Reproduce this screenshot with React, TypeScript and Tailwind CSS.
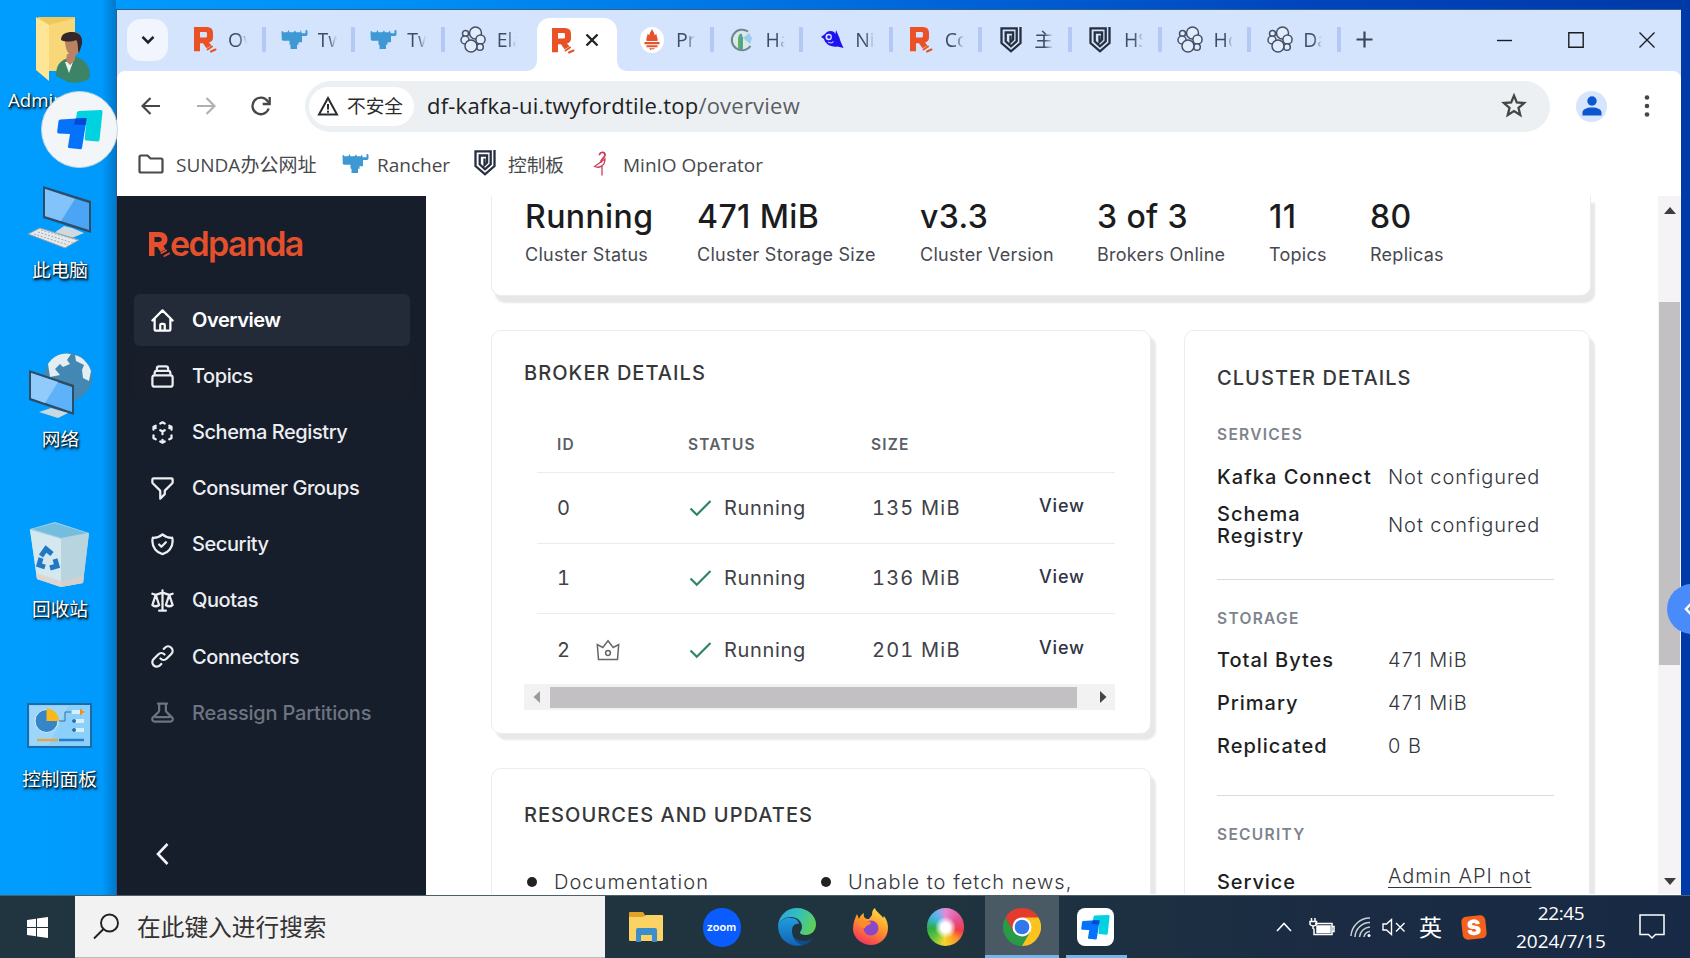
import type { ReactNode } from "react";

/* ---------- small logos ---------- */

function RedpandaMark() {
  return (
    <svg width="24" height="27" viewBox="0 0 24 27" className="shrink-0">
      <path
        fill="#ea5126"
        fillRule="evenodd"
        d="M1 1h13q6 0 6 6v4.500q0 4-4 5l2.500 3-5 2.700-3.500-5H7v8H1zM7 6v5.500h5.500q1.500 0 1.500-1.300V7.300Q14 6 12.500 6z"
      />
      <path stroke="#ea5126" strokeWidth="2" strokeLinecap="round" d="M14.500 23.500l4.500-3M18 25.500l4.500-2" />
    </svg>
  );
}

function RancherMark() {
  return (
    <svg width="27" height="22" viewBox="0 0 27 22" className="shrink-0">
      <path
        fill="#3d98d3"
        d="M.5 2.500L2 2l.3 1.200h4L7.500 1l1 2.200h4L14 1.500l1 1.700h4l.8-2 1 3h3.700V1.600l1.300-.8.700 1.200v4l-1.300 1h-4.200v6.300h-3.500v2.500h-1.500v4.300H9.500v-4.300h-1v-4H2L.8 11z"
      />
    </svg>
  );
}

function ElasticMark() {
  return (
    <svg width="26" height="27" viewBox="0 0 26 27" className="shrink-0" fill="#e3ecfb" stroke="#44506a" strokeWidth="1.500">
      <circle cx="15.500" cy="7" r="6" />
      <circle cx="5.500" cy="7.500" r="3" />
      <circle cx="5" cy="14" r="4" />
      <circle cx="20.500" cy="13.500" r="4.600" />
      <circle cx="20" cy="21" r="3.300" />
      <circle cx="11" cy="20" r="6" />
    </svg>
  );
}

function PrometheusMark() {
  return (
    <svg width="24" height="26" viewBox="0 0 24 26" className="shrink-0">
      <ellipse cx="12" cy="13" rx="12" ry="13" fill="#fff" />
      <path
        fill="#e5532c"
        d="M12 2c1.500 3 2.600 4 2.700 6.500l1.600-1.800c.2 3 2 4.500 1.200 7.300H6.500C5.700 11 7.500 9.500 7.700 6.500l1.600 2C9.400 6 11 4.500 12 2zM4.500 15h15v2.200h-15zM6.500 18.200h11v2h-11zM9 21.200h6c-.6 1.600-5.400 1.600-6 0z"
      />
    </svg>
  );
}

function HarborMark() {
  return (
    <svg width="24" height="24" viewBox="0 0 24 24" className="shrink-0">
      <path d="M18 3.500A10.300 10.300 0 1 0 20.500 18" fill="#d8e9e6" stroke="#6f8792" strokeWidth="2" />
      <path fill="#62b257" d="M8 21V10l1-3 1.500-1.500L12 7l1 3v11z" />
      <path fill="#4596c8" d="M10.500 6h1.500v15h-1.500z" />
      <path fill="#9ccdf0" d="M13 10l6-5 3 5-2 6z" />
    </svg>
  );
}

function BirdMark() {
  return (
    <svg width="24" height="22" viewBox="0 0 24 22" className="shrink-0">
      <path fill="#1d13ef" d="M1 8l4-3C7 2 11 1 14 3l1.500 2L16 1l3.500 8c1 4 2 5 4 10l-6-1.500C11 18.500 5 15 4 10z" />
      <circle cx="8.700" cy="8" r="3.200" fill="#dfe6fd" />
      <circle cx="8.900" cy="8" r="1.700" fill="#1d13ef" />
      <path stroke="#a9b4fa" strokeWidth="1.200" fill="none" d="M8 13c2 1.500 4 1 5.500-.5" />
    </svg>
  );
}

function ShieldMark() {
  return (
    <svg width="22" height="26" viewBox="0 0 22 26" className="shrink-0" fill="none" stroke="#262f40" strokeWidth="2.300">
      <path d="M20.500 0v16L11 24.300 1.500 16V1.300h15.200v12.900L11 19.300l-5.300-5V5.500h7.400v7L10.500 15V8.500" />
    </svg>
  );
}

function FlamingoMark() {
  return (
    <svg width="16" height="25" viewBox="0 0 16 25" className="shrink-0" fill="none" stroke="#cc3b58" strokeLinecap="round">
      <path strokeWidth="1.800" d="M6.500 3.500C7.500.5 12 .8 12 4c0 3-4.500 4-4 7" />
      <path strokeWidth="1.300" d="M12 8L1.500 15.500C6 17.500 12 15 12 8zM9 15.500V24" />
    </svg>
  );
}

function TeamMark({ w, h }: { w: number; h: number }) {
  return (
    <svg width={w} height={h} viewBox="0 0 46 40" className="shrink-0">
      <path fill="#00d2e0" d="M20 2.500Q20 1 22 .9L44 0q1.700 0 1.500 2L42.500 30q-.2 1.600-2 1.400L29 30.500q-1.500-.2-1.300-1.700L29 15H18z" />
      <path fill="#0572fb" d="M1.500 11Q1.700 9.700 3.500 9.500L28.500 8q1.300 0 1.100 1.500L25 38q-.3 1.300-1.700 1.200L12 38q-1.300-.2-1-1.500L13 24 1.500 23.500q-1.500-.2-1.300-2z" />
      <path fill="#0349d6" d="M18.500 8.600L29.500 8l-1 7L17 14.500z" />
    </svg>
  );
}

/* ---------- desktop ---------- */

function DesktopLabel({ children }: { children: ReactNode }) {
  return (
    <span className="whitespace-nowrap text-[18.700px] leading-6 text-white [text-shadow:1px_1px_2px_#000,1px_2px_3px_rgba(0,0,0,0.8)]">
      {children}
    </span>
  );
}

function UserFolderIcon() {
  return (
    <svg width="58" height="68" viewBox="0 0 58 68">
      <path fill="#f1c75b" d="M4 1h37v54H4z" />
      <path fill="#ffe596" d="M2 1l13 8v56L2 54z" />
      <path fill="#f8d778" d="M15 9l26-7v52l-26 1z" />
      <path fill="#3c8468" d="M22 60c0-10 3-15 12-18l9-1c8 3 13 8 13 20-2 5-16 7-22 5z" />
      <path fill="#eef3f3" d="M31 46l4 11 4-11z" />
      <path fill="#b98263" d="M31 24c0-6 3-8 9-8s8 4 7 12-4 12-8 12-8-6-8-16zM33 38h8v6l-5 5-4-4z" />
      <path fill="#35262a" d="M27 24c0-6 5-8 11-8 8 0 11 5 10 12l-3 9c-2-3 0-10-3-13-4 2-11 2-15 0z" />
    </svg>
  );
}

function ComputerIcon() {
  return (
    <svg width="64" height="64" viewBox="0 0 64 64">
      <path fill="#2d4d66" d="M15 1l48 15v32L15 33z" />
      <path fill="#4ba4f4" d="M17 4l44 14v27L17 31z" />
      <path fill="#83c3fb" d="M17 4l30 10-14 22-16-5z" />
      <path fill="#cfd9de" d="M36 41l8 2 12 5-12 5-18-5z" />
      <path fill="#e5eaed" stroke="#8c9da8" d="M0 49l12-6 39 12-14 8z" />
      <path stroke="#9cabb4" strokeWidth="1" strokeDasharray="2 1.500" d="M6 49l34 11M10 47l35 11M13 45l36 10" />
    </svg>
  );
}

function NetworkIcon() {
  return (
    <svg width="64" height="66" viewBox="0 0 64 66">
      <circle cx="39" cy="25" r="24" fill="#4288b2" />
      <path fill="#e2eef2" d="M19 12C24 4 33 0 42 2l-4 6 3 4-7 3-3-3-5 5 5 6-10 2zM46 3c8 2 14 9 16 16l-2 10-6-3-1-8 2-5-8-4z" />
      <path fill="#2d4d66" d="M0 18l45 15v30L0 48z" />
      <path fill="#5eb2fa" d="M2 21l41 14v25L2 46z" />
      <path fill="#91cbfc" d="M2 21l27 9-13 21-14-5z" />
      <path fill="#cbd8df" d="M10 60l12-4 17 5-10 5z" />
    </svg>
  );
}

function RecycleIcon() {
  return (
    <svg width="60" height="66" viewBox="0 0 60 66">
      <path fill="#a9d7ea" d="M0 7L25 0l34 11-6 50-22 4L7 57z" />
      <path fill="#75bddd" d="M2 7l23-6 32 10-26 5z" />
      <path fill="#d5e8ef" d="M0 8l31 9v48L7 57z" />
      <path fill="#b7d4df" d="M31 17l28-6-6 50-22 4z" />
      <path fill="#e0cfc8" d="M6 51l25 8 23-5-1 7-22 4-24-8z" opacity=".7" />
      <g fill="none" stroke="#1f77c5" strokeWidth="5">
        <path d="M11 34l5-7 6 5" />
        <path d="M25 37l2 7-7 2" />
        <path d="M15 45l-6-2 2-7" />
      </g>
    </svg>
  );
}

function ControlPanelIcon() {
  return (
    <svg width="65" height="45" viewBox="0 0 65 45">
      <rect x="1" y="1" width="63" height="43" fill="#8bd0fb" stroke="#1d6ba6" strokeWidth="2" />
      <path fill="#a8dcfc" d="M3 3h38L22 42H3z" opacity=".6" />
      <circle cx="19.500" cy="18" r="11.500" fill="#3586c8" stroke="#d8effd" />
      <path fill="#fbb81c" d="M19.500 18V5.500A12.500 12.500 0 0 1 32 18z" />
      <path fill="none" stroke="#33739e" d="M32 18h6V9h6" />
      <path stroke="#d5effd" strokeWidth="4" d="M45 9h12M45 18h12M45 27h12" />
      <path fill="#e89127" d="M53 5.500l5 3.500-5 3.500z" />
      <circle cx="47" cy="18" r="2" fill="#2070b0" />
      <circle cx="47" cy="27" r="2" fill="#2070b0" />
      <path stroke="#e7a544" strokeWidth="2.500" d="M10 37h21" />
      <path stroke="#2380c6" strokeWidth="2.500" d="M32 37h25" />
    </svg>
  );
}

function Desktop() {
  return (
    <div className="flex h-[895px] w-[116px] shrink-0 flex-col bg-[linear-gradient(90deg,transparent_88%,rgba(0,60,110,0.35)_100%)]">
      <div className="flex h-[170px] flex-col items-start pl-2 pt-4">
        <div className="pl-[26px]">
          <UserFolderIcon />
        </div>
        <div className="mt-[4px]">
          <DesktopLabel>Admin</DesktopLabel>
        </div>
      </div>
      <div className="flex h-[168px] w-[120px] flex-col items-center pt-[15px]">
        <ComputerIcon />
        <div className="mt-[9px]">
          <DesktopLabel>此电脑</DesktopLabel>
        </div>
      </div>
      <div className="flex h-[169px] w-[121px] flex-col items-center pt-[14px]">
        <NetworkIcon />
        <div className="mt-[9px]">
          <DesktopLabel>网络</DesktopLabel>
        </div>
      </div>
      <div className="flex h-[171px] w-[120px] flex-col items-center pt-[15px]">
        <RecycleIcon />
        <div className="mt-[9px]">
          <DesktopLabel>回收站</DesktopLabel>
        </div>
      </div>
      <div className="flex w-[119px] flex-col items-center pt-[25px]">
        <ControlPanelIcon />
        <div className="mt-[19px]">
          <DesktopLabel>控制面板</DesktopLabel>
        </div>
      </div>
    </div>
  );
}

/* ---------- browser chrome ---------- */

type Tab = { icon: ReactNode; title: string; active?: boolean; sep?: boolean };

const tabs: Tab[] = [
  { icon: <RedpandaMark />, title: "Ov", sep: true },
  { icon: <RancherMark />, title: "Tw", sep: true },
  { icon: <RancherMark />, title: "Tw", sep: true },
  { icon: <ElasticMark />, title: "Ela" },
  { icon: <RedpandaMark />, title: "", active: true },
  { icon: <PrometheusMark />, title: "Pr", sep: true },
  { icon: <HarborMark />, title: "Ha", sep: true },
  { icon: <BirdMark />, title: "Ni", sep: true },
  { icon: <RedpandaMark />, title: "Co", sep: true },
  { icon: <ShieldMark />, title: "主", sep: true },
  { icon: <ShieldMark />, title: "HS", sep: true },
  { icon: <ElasticMark />, title: "Ho", sep: true },
  { icon: <ElasticMark />, title: "Da", sep: true },
];

function TabItem({ tab }: { tab: Tab }) {
  if (tab.active) {
    return (
      <div className="flex h-[61px] w-[89.600px] items-end">
        <svg width="11" height="12" viewBox="0 0 11 12" className="-ml-[8px] shrink-0">
          <path fill="#fff" d="M11 0v12H0C8 12 11 7 11 0z" />
        </svg>
        <div className="flex h-[53px] w-[80px] shrink-0 items-center rounded-t-[13px] bg-white pb-[9px] pl-[14px]">
          <RedpandaMark />
          <svg width="14" height="14" viewBox="0 0 14 14" className="ml-[10px] shrink-0" stroke="#1f2023" strokeWidth="2.300">
            <path d="M1.500 1.500l11 11M12.500 1.500l-11 11" />
          </svg>
        </div>
        <svg width="11" height="12" viewBox="0 0 11 12" className="shrink-0">
          <path fill="#fff" d="M0 0v12h11C3 12 0 7 0 0z" />
        </svg>
      </div>
    );
  }
  return (
    <div className="flex h-[61px] w-[89.600px] items-center pb-[2px]">
      <div className="ml-[15px] flex w-[27px] shrink-0 items-center justify-center">{tab.icon}</div>
      <span className="ml-[10px] w-[19px] shrink-0 overflow-hidden whitespace-nowrap text-[19.500px] leading-7 text-[#3f4d63] [mask-image:linear-gradient(to_right,black_55%,transparent)]">
        {tab.title}
      </span>
      <span className={tab.sep ? "ml-auto h-[25px] w-[4px] bg-[#b4c8f5]" : "hidden"} />
    </div>
  );
}

function TabStrip() {
  return (
    <div className="flex h-[61px] items-center bg-[#d4e4fd] pl-[10px]">
      <div className="mb-[1px] flex h-[42px] w-[41px] items-center justify-center rounded-[14px] bg-[#f0f5fe]">
        <svg width="14" height="10" viewBox="0 0 14 10" fill="none" stroke="#1f2023" strokeWidth="2.600">
          <path d="M1.500 1.800L7 7.300l5.500-5.500" />
        </svg>
      </div>
      <div className="ml-[8px] flex">
        {tabs.map((t, i) => (
          <TabItem key={i} tab={t} />
        ))}
      </div>
      <svg width="17" height="17" viewBox="0 0 17 17" className="mb-[2px] ml-[15px]" stroke="#3a4557" strokeWidth="2.200">
        <path d="M8.500 .5v16M.5 8.500h16" />
      </svg>
      <div className="mb-[1px] ml-auto flex items-center gap-[55px] pr-[26px]">
        <svg width="16" height="16" viewBox="0 0 16 16" stroke="#1b1c1f" strokeWidth="1.400">
          <path d="M0 8.500h15" />
        </svg>
        <svg width="16" height="16" viewBox="0 0 16 16" fill="none" stroke="#1b1c1f" strokeWidth="1.400">
          <path d="M.8 .8h14.400v14.400H.8z" />
        </svg>
        <svg width="16" height="16" viewBox="0 0 16 16" stroke="#1b1c1f" strokeWidth="1.400">
          <path d="M.5 .5l15 15M15.500 .5l-15 15" />
        </svg>
      </div>
    </div>
  );
}

function Toolbar() {
  return (
    <div className="bg-[#d4e4fd]">
      <div className="flex h-[70px] items-center rounded-t-[8px] bg-white">
        <svg width="20" height="18" viewBox="0 0 20 18" className="ml-[24px]" fill="none" stroke="#474747" strokeWidth="2.200">
          <path d="M19 9H2M9.500 1L1.500 9l8 8" />
        </svg>
        <svg width="20" height="18" viewBox="0 0 20 18" className="ml-[35px]" fill="none" stroke="#b0b0b0" strokeWidth="2.200">
          <path d="M1 9h17M10.500 1l8 8-8 8" />
        </svg>
        <svg width="20" height="20" viewBox="0 0 20 20" className="ml-[35px]" fill="none" stroke="#474747" strokeWidth="2.300">
          <path d="M17.700 12.500A8.300 8.300 0 1 1 16.500 5L18.500 7.200" />
          <path d="M18.700 1v7h-7" />
        </svg>
        <div className="ml-[34px] flex h-[51px] w-[1245px] items-center rounded-full bg-[#ecf0f3] pl-[4px]">
          <div className="flex h-[39px] w-[105px] items-center rounded-full bg-white pl-[8px]">
            <svg width="22" height="20" viewBox="0 0 22 20" fill="none" stroke="#2b2c2e" strokeWidth="2">
              <path d="M11 2L20 18.500H2zM11 8v5.500M11 14.800v2" />
            </svg>
            <span className="ml-[8px] whitespace-nowrap text-[18.700px] leading-7 text-[#2b2c2e]">不安全</span>
          </div>
          <span className="-mt-[2px] ml-[13px] whitespace-nowrap text-[22px] leading-8 tracking-[0.220px] text-[#202124]">
            df-kafka-ui.twyfordtile.top<span className="text-[#5a5e63]">/overview</span>
          </span>
          <svg width="26" height="25" viewBox="0 0 24 24" className="mb-[2px] ml-auto mr-[23px]" fill="none" stroke="#444746" strokeWidth="2.200">
            <path d="M12 2.500l2.700 6.600 7 .5-5.400 4.600 1.700 6.900-6-3.800-6 3.800 1.700-6.900L2.300 9.600l7-.5z" />
          </svg>
        </div>
        <div className="ml-[26px] flex h-[31px] w-[31px] items-center justify-center rounded-full bg-[#d6e4fd]">
          <svg width="20" height="20" viewBox="0 0 20 20" fill="#0b57d0">
            <circle cx="10" cy="5" r="4.700" />
            <path d="M.5 19.500v-3c0-3 4-5 9.500-5s9.500 2 9.500 5v3z" />
          </svg>
        </div>
        <svg width="6" height="24" viewBox="0 0 6 24" className="ml-[37px]" fill="#444746">
          <circle cx="3" cy="3.500" r="2.300" />
          <circle cx="3" cy="12" r="2.300" />
          <circle cx="3" cy="20.500" r="2.300" />
        </svg>
      </div>
    </div>
  );
}

function BookmarksBar() {
  return (
    <div className="flex h-[55px] items-start whitespace-nowrap bg-white text-[19px] leading-7 text-[#47494c]">
      <svg width="26" height="20" viewBox="0 0 26 20" className="ml-[21px] mt-[13px]" fill="none" stroke="#47494c" strokeWidth="2.200">
        <path d="M1.500 3q0-1.500 1.500-1.500h6.500L12.500 4.500H23q1.500 0 1.500 1.500v11q0 1.500-1.500 1.500H3q-1.500 0-1.500-1.500z" />
      </svg>
      <span className="ml-[12px] mt-[10px] w-[141px]">SUNDA办公网址</span>
      <div className="ml-[25px] mt-[12px]">
        <RancherMark />
      </div>
      <span className="ml-[8px] mt-[10px] w-[73px]">Rancher</span>
      <div className="ml-[24px] mt-[9px]">
        <ShieldMark />
      </div>
      <span className="ml-[12px] mt-[10px] w-[57px] text-[18.700px]">控制板</span>
      <div className="ml-[28px] mt-[10px]">
        <FlamingoMark />
      </div>
      <span className="ml-[14px] mt-[10px]">MinIO Operator</span>
    </div>
  );
}

/* ---------- sidebar ---------- */

const nav = [
  {
    label: "Overview",
    state: "active",
    d: "M3 12l2-2m0 0l7-7 7 7M5 10v10a1 1 0 001 1h3m10-11l2 2m-2-2v10a1 1 0 01-1 1h-3m-6 0a1 1 0 001-1v-4a1 1 0 011-1h2a1 1 0 011 1v4a1 1 0 001 1m-6 0h6",
  },
  {
    label: "Topics",
    state: "hover",
    d: "M19 11H5m14 0a2 2 0 012 2v6a2 2 0 01-2 2H5a2 2 0 01-2-2v-6a2 2 0 012-2m14 0V9a2 2 0 00-2-2M5 11V9a2 2 0 012-2m0 0V5a2 2 0 012-2h6a2 2 0 012 2v2M7 7h10",
  },
  {
    label: "Schema Registry",
    state: "",
    d: "M14 10l-2 1m0 0l-2-1m2 1v2.500M20 7l-2 1m2-1l-2-1m2 1v2.500M14 4l-2-1-2 1M4 7l2-1M4 7l2 1M4 7v2.500M12 21l-2-1m2 1l2-1m-2 1v-2.500M6 18l-2-1v-2.500M18 18l2-1v-2.500",
  },
  {
    label: "Consumer Groups",
    state: "",
    d: "M3 4a1 1 0 011-1h16a1 1 0 011 1v2.586a1 1 0 01-.293.707l-6.414 6.414a1 1 0 00-.293.707V17l-4 4v-6.586a1 1 0 00-.293-.707L3.293 7.293A1 1 0 013 6.586V4z",
  },
  {
    label: "Security",
    state: "",
    d: "M9 12l2 2 4-4m5.618-4.016A11.955 11.955 0 0112 2.944a11.955 11.955 0 01-8.618 3.040A12.020 12.020 0 003 9c0 5.591 3.824 10.290 9 11.622 5.176-1.332 9-6.030 9-11.622 0-1.042-.133-2.052-.382-3.016z",
  },
  {
    label: "Quotas",
    state: "",
    d: "M3 6l3 1m0 0l-3 9a5.002 5.002 0 006.001 0M6 7l3 9M6 7l6-2m6 2l3-1m-3 1l-3 9a5.002 5.002 0 006.001 0M18 7l3 9m-3-9l-6-2m0-2v2m0 16V5m0 16H9m3 0h3",
  },
  {
    label: "Connectors",
    state: "",
    d: "M13.828 10.172a4 4 0 00-5.656 0l-4 4a4 4 0 105.656 5.656l1.102-1.101m-.758-4.899a4 4 0 005.656 0l4-4a4 4 0 00-5.656-5.656l-1.100 1.100",
  },
  {
    label: "Reassign Partitions",
    state: "disabled",
    d: "M8 4h8l-1 1v5.172a2 2 0 00.586 1.414l5 5c1.260 1.260.367 3.414-1.415 3.414H4.828c-1.782 0-2.674-2.154-1.414-3.414l5-5A2 2 0 009 10.172V5L8 4zM6 16h12",
  },
];

function Sidebar() {
  return (
    <aside className="flex w-[309px] shrink-0 flex-col bg-[#161d2b] px-[17px] [font-family:Inter,sans-serif]">
      <div className="mt-[24px] flex h-[48px] items-center pl-[14px] text-[34px] font-semibold leading-[48px] tracking-[-1.600px] text-[#e4502b]">
        <svg width="24" height="27" viewBox="0 0 24 27" className="mr-[-2px] mt-[1px] shrink-0">
          <path
            fill="#e4502b"
            fillRule="evenodd"
            d="M1 1h10c5.500 0 8.500 3 8.500 7.500 0 3-1.500 5.200-4 6.500l2 3.200-5 2.800-3-5H6.500V25H1zM6.500 6v5h4c2 0 3.300-.9 3.300-2.500S12.500 6 10.500 6z"
          />
          <path stroke="#e4502b" strokeWidth="2" strokeLinecap="round" d="M13.500 22l4.500-2.500M16.500 25l4.500-2.500" />
        </svg>
        edpanda
      </div>
      <nav className="mt-[26px] flex flex-col gap-[4.100px]">
        {nav.map((n) => (
          <div
            key={n.label}
            className={
              n.state === "active"
                ? "flex h-[52px] w-[276px] items-center rounded-[6px] bg-[#232b38] pl-[15px] font-semibold text-white"
                : n.state === "hover"
                  ? "flex h-[52px] w-[276px] items-center rounded-[6px] bg-[#181e2a] pl-[15px] font-medium text-[#eceef2]"
                  : n.state === "disabled"
                    ? "flex h-[52px] w-[276px] items-center pl-[15px] font-medium tracking-[0.200px] text-[#6d7481]"
                    : "flex h-[52px] w-[276px] items-center pl-[15px] font-medium text-[#eceef2]"
            }
          >
            <svg
              width="27"
              height="27"
              viewBox="0 0 24 24"
              fill="none"
              stroke="currentColor"
              strokeWidth="2"
              strokeLinecap="round"
              strokeLinejoin="round"
              className="shrink-0"
            >
              <path d={n.d} />
            </svg>
            <span
              className={
                n.state === "disabled"
                  ? "ml-[16px] whitespace-nowrap text-[20px] leading-7 tracking-[-0.200px]"
                  : "ml-[16px] whitespace-nowrap text-[20px] leading-7 tracking-[-0.420px]"
              }
            >
              {n.label}
            </span>
          </div>
        ))}
      </nav>
      <svg width="13" height="22" viewBox="0 0 13 22" className="ml-[22px] mt-[104px]" fill="none" stroke="#f2f3f5" strokeWidth="2.600">
        <path d="M11.500 1L2 11l9.500 10" />
      </svg>
    </aside>
  );
}

/* ---------- page content ---------- */

const stats = [
  { v: "Running", l: "Cluster Status" },
  { v: "471 MiB", l: "Cluster Storage Size" },
  { v: "v3.3", l: "Cluster Version" },
  { v: "3 of 3", l: "Brokers Online" },
  { v: "11", l: "Topics" },
  { v: "80", l: "Replicas" },
];

const brokers = [
  { id: "0", size: "135 MiB", leader: false },
  { id: "1", size: "136 MiB", leader: false },
  { id: "2", size: "201 MiB", leader: true },
];

function BrokerTable() {
  return (
    <div className="mt-[30px] w-[591px]">
      <div className="ml-[13px]">
        <div className="grid h-[56px] grid-cols-[131px_183px_167px_1fr] items-center border-b border-[#e9ecf1] pl-[20px] text-[15.500px] font-semibold leading-6 tracking-[1.200px] text-[#5b5f66]">
          <span>ID</span>
          <span>STATUS</span>
          <span>SIZE</span>
        </div>
        {brokers.map((b) => (
          <div
            key={b.id}
            className={
              b.leader
                ? "grid h-[71px] grid-cols-[131px_184px_167px_1fr] items-center pl-[20px] text-[20px] leading-7 text-[#3f4248]"
                : "grid h-[70.500px] grid-cols-[131px_184px_167px_1fr] items-center border-b border-[#e9ebee] pl-[20px] text-[20px] leading-7 text-[#3f4248]"
            }
          >
            <span className="flex items-center">
              <span className="w-[38px] tabular-nums">{b.id}</span>
              {b.leader && (
                <svg width="24" height="22" viewBox="0 0 24 22" fill="none" stroke="#66666b" strokeWidth="1.500" className="ml-px">
                  <path d="M2.500 20.500L1.300 5.500l5.500 3L12 1.800l5.200 6.700 5.500-3-1.200 15z" />
                  <circle cx="12" cy="14" r="2.400" />
                </svg>
              )}
            </span>
            <span className="flex items-center tracking-[0.650px]">
              <svg width="24" height="18" viewBox="0 0 24 18" className="ml-[1px] mr-[11px]" fill="none" stroke="#2f8468" strokeWidth="2.200">
                <path d="M1.500 9.500l6.300 6.300L21.500 2" />
              </svg>
              Running
            </span>
            <span className="tabular-nums tracking-[1.200px]">{b.size}</span>
            <span className="-mt-[3px] text-[18px] font-medium tracking-[0.800px] text-[#2f3444]">View</span>
          </div>
        ))}
      </div>
      <div className="-mt-px flex h-[26px] items-center bg-[#f3f2f3]">
        <svg width="26" height="12" viewBox="0 0 26 12" fill="#9c9a9c">
          <path d="M16 0v12L9.500 6z" />
        </svg>
        <div className="h-[21px] w-[527px] bg-[#c2c0c2]" />
        <svg width="38" height="12" viewBox="0 0 38 12" fill="#444">
          <path d="M23 0v12l6.500-6z" />
        </svg>
      </div>
    </div>
  );
}

function DetailRow({ name, value }: { name: string; value: string }) {
  return (
    <div className="flex h-[43px] items-center">
      <span className="w-[171px] font-medium text-[#1d1f24]">{name}</span>
      <span className="font-light text-[#33363c]">{value}</span>
    </div>
  );
}

function SectionLabel({ children }: { children: ReactNode }) {
  return <h3 className="text-[15.500px] font-semibold leading-5 tracking-[1.300px] text-[#7d848e]">{children}</h3>;
}

function ClusterCard() {
  return (
    <section className="h-[640px] w-[406px] rounded-[10px] border border-[#ebecee] bg-white pl-[32px] pr-[35px] pt-[33px] text-[20px] shadow-[5px_7px_2px_#e8e7e9]">
      <h2 className="text-[20px] font-medium leading-7 tracking-[1.050px] text-[#35373b]">CLUSTER DETAILS</h2>
      <div className="mt-[33px]">
        <SectionLabel>SERVICES</SectionLabel>
      </div>
      <div className="mt-[12px] flex h-[40px] items-center whitespace-nowrap">
        <span className="w-[171px] font-medium tracking-[1.020px] text-[#1d1f24]">Kafka Connect</span>
        <span className="font-light tracking-[0.930px] text-[#33363c]">Not configured</span>
      </div>
      <div className="mt-[5px] flex h-[46px] items-center">
        <span className="w-[171px] pr-[50px] font-medium leading-[22.500px] tracking-[1.050px] text-[#1d1f24]">Schema Registry</span>
        <span className="whitespace-nowrap font-light tracking-[0.930px] text-[#33363c]">Not configured</span>
      </div>
      <div className="mt-[31px] h-px bg-[#d9dbdf]" />
      <div className="mt-[29px]">
        <SectionLabel>STORAGE</SectionLabel>
      </div>
      <div className="mt-[9px] tracking-[0.980px]">
        <DetailRow name="Total Bytes" value="471 MiB" />
        <DetailRow name="Primary" value="471 MiB" />
        <DetailRow name="Replicated" value="0 B" />
      </div>
      <div className="mt-[28px] h-px bg-[#d9dbdf]" />
      <div className="mt-[29px]">
        <SectionLabel>SECURITY</SectionLabel>
      </div>
      <div className="mt-[17px] flex items-start leading-7">
        <span className="mt-[6px] w-[171px] font-medium tracking-[0.900px] text-[#1d1f24]">Service</span>
        <span className="font-light tracking-[0.930px] text-[#33363c] underline decoration-1 underline-offset-4">Admin API not</span>
      </div>
    </section>
  );
}

function Overview() {
  return (
    <main className="h-[698px] min-w-0 flex-1 overflow-hidden bg-white pl-[65px] [font-family:Inter,sans-serif]">
      <section className="h-[100px] w-[1100px] rounded-b-[10px] border-x border-b border-[#ebecee] bg-white pl-[33px] shadow-[4px_7px_2px_#e7e7e7]">
        <div className="grid grid-cols-[172px_223px_177px_172px_101px_1fr]">
          {stats.map((s) => (
            <div key={s.l} className="whitespace-nowrap">
              <div className="text-[32px] font-medium leading-[42px] tracking-[0.400px] text-[#1b1c20]">{s.v}</div>
              <div className="mt-[5px] text-[18px] leading-6 tracking-[0.270px] text-[#46494f]">{s.l}</div>
            </div>
          ))}
        </div>
      </section>
      <div className="mt-[34px] flex gap-[33px]">
        <div className="flex w-[660px] shrink-0 flex-col">
          <section className="h-[404px] rounded-[10px] border border-[#ebecee] bg-white pl-[32px] pt-[28px] shadow-[5px_6px_2px_#e7e8e8]">
            <h2 className="text-[20px] font-medium leading-7 tracking-[1.050px] text-[#35373b]">BROKER DETAILS</h2>
            <BrokerTable />
          </section>
          <section className="mt-[34px] h-[200px] rounded-[10px] border border-[#ebecee] bg-white pl-[32px] pt-[32px] shadow-[5px_7px_2px_#e8e7e9]">
            <h2 className="text-[20px] font-medium leading-7 tracking-[1.050px] text-[#35373b]">RESOURCES AND UPDATES</h2>
            <div className="mt-[39px] grid grid-cols-[294px_1fr] whitespace-nowrap text-[20px] font-light leading-7 tracking-[1.050px] text-[#33363c]">
              <div className="flex items-center">
                <span className="ml-[3px] mr-[17px] h-[10px] w-[10px] rounded-full bg-[#222]" />
                Documentation
              </div>
              <div className="flex items-center">
                <span className="ml-[3px] mr-[17px] h-[10px] w-[10px] rounded-full bg-[#222]" />
                Unable to fetch news,
              </div>
            </div>
          </section>
        </div>
        <ClusterCard />
      </div>
    </main>
  );
}

function PageScrollbar() {
  return (
    <div className="flex h-[698px] w-[23px] shrink-0 flex-col items-center bg-[#f5f3f5]">
      <svg width="12" height="7" viewBox="0 0 12 7" className="mt-[11px]" fill="#3d3d3d">
        <path d="M0 7L6 0l6 7z" />
      </svg>
      <div className="mt-[88px] h-[363px] w-[21px] bg-[#c3c0c3]" />
      <svg width="12" height="7" viewBox="0 0 12 7" className="mt-[213px]" fill="#3d3d3d">
        <path d="M0 0h12L6 7z" />
      </svg>
    </div>
  );
}

/* ---------- taskbar ---------- */

function ExplorerIcon() {
  return (
    <svg width="36" height="32" viewBox="0 0 36 32">
      <path fill="#e0a326" d="M1 2q0-1 1-1h13l2 3v4H1z" />
      <path fill="#fbd365" d="M1 6h14l3-2h16q1 0 1 1v24q0 1-1 1H2q-1 0-1-1z" />
      <path fill="#3a8ecb" d="M8 19q0-2 2-2h17q2 0 2 2v12h-5v-7H13v7H8z" />
    </svg>
  );
}

function ZoomIcon() {
  return (
    <div className="flex h-[39px] w-[38px] items-center justify-center rounded-full bg-[#0b5cff] text-[11px] font-semibold leading-none text-white [font-family:Inter,sans-serif]">
      zoom
    </div>
  );
}

function EdgeIcon() {
  return (
    <svg width="38" height="38" viewBox="0 0 38 38">
      <defs>
        <linearGradient id="edgeTop" x1="0" y1=".3" x2="1" y2=".6">
          <stop offset="0" stopColor="#2aa6e0" />
          <stop offset=".5" stopColor="#35c1b8" />
          <stop offset="1" stopColor="#63d152" />
        </linearGradient>
        <linearGradient id="edgeSide" x1="0" y1="0" x2="0" y2="1">
          <stop offset="0" stopColor="#1f9de0" />
          <stop offset="1" stopColor="#1463b3" />
        </linearGradient>
      </defs>
      <path fill="#0f4c8d" d="M13 20c0 9 6 13 13 13 4 0 7-1 9-3-4 6-10 8-16 8C10 38 5 30 6 22z" />
      <path fill="url(#edgeSide)" d="M0 18c2-6 8-9 13-8 5 0 8 3 8 6-4-1-7 2-7 7 0 7 4 12 10 14C11 40 0 31 0 18z" />
      <path fill="url(#edgeTop)" d="M0 18C1 7 9 0 19 0c11 0 19 8 19 16 0 7-5 11-10 11-4 0-6-1-6-2.500 0-1 2-2.500 2-5.500 0-6-5-10-11-10C7 9 2 12 0 18z" />
    </svg>
  );
}

function FirefoxIcon() {
  return (
    <svg width="37" height="38" viewBox="0 0 37 38">
      <defs>
        <linearGradient id="fox" x1=".8" y1="0" x2=".3" y2="1">
          <stop offset="0" stopColor="#ffe04a" />
          <stop offset=".45" stopColor="#ff9a2b" />
          <stop offset="1" stopColor="#f5315a" />
        </linearGradient>
      </defs>
      <path
        fill="url(#fox)"
        d="M1 21C1 15 3 10 5 6l2 5c1-3 3-5 5-6-1 4 1 6 5 6l3-4c0-4 1-6 3-7 1 4 6 6 8 10l1-2c3 4 4 8 4 12 0 10-8 17-17 17S1 30 1 21z"
      />
      <circle cx="19" cy="20" r="7.500" fill="#8a48c9" />
      <path fill="#ff8a2a" d="M6 14c5-3 9-1 13 0 0 3-5 3-6 6-2 1-7-2-7-6z" />
    </svg>
  );
}

function PinwheelIcon() {
  return (
    <div className="flex h-[38px] w-[37px] items-center justify-center rounded-full bg-[conic-gradient(from_0deg,#e889d4,#e2518f_60deg,#f23c44_105deg,#fb9b29_140deg,#f4d62c_185deg,#68c53a_225deg,#2dac45_265deg,#3eb6dc_305deg,#80aeea_335deg,#e889d4)]">
      <div className="h-[21px] w-[21px] rounded-full bg-[radial-gradient(circle,#fff_30%,rgba(255,255,255,0)_72%)]" />
    </div>
  );
}

function ChromeIcon() {
  return (
    <svg width="38" height="38" viewBox="0 0 48 48">
      <path fill="#e33b2e" d="M24 24L3.200 12A24 24 0 0 1 44.800 12z" />
      <path fill="#fcc31e" d="M24 24V12h20.800A24 24 0 0 1 24 48z" />
      <path fill="#2a9a47" d="M24 48A24 24 0 0 1 3.200 12l10.400 18L24 36l10.400-6z" />
      <path fill="#e33b2e" d="M3.200 12L13.600 30 24 12z" />
      <circle cx="24" cy="24" r="12" fill="#fff" />
      <circle cx="24" cy="24" r="9.300" fill="#3378e8" />
    </svg>
  );
}

function Tray() {
  return (
    <div className="ml-auto flex h-full items-center text-white">
      <svg width="16" height="10" viewBox="0 0 16 10" fill="none" stroke="#fff" strokeWidth="1.600">
        <path d="M1 9l7-7.500L15 9" />
      </svg>
      <svg width="26" height="19" viewBox="0 0 26 19" className="ml-[17px]" fill="none" stroke="#fff" strokeWidth="1.500">
        <path d="M6 5.500h17v11H5v-6M23.500 8.500h1.500v5h-1.500M2.500 0v3M6 0v3M1 3.500h6.500v3q-3 3-6.500 0zM4 8v3" />
        <path fill="#fff" d="M8 8h13v6.500H8z" />
      </svg>
      <svg width="22" height="21" viewBox="0 0 22 21" className="ml-[15px]" fill="none" stroke="#c9d0d8" strokeWidth="1.500">
        <path d="M1 19A19 19 0 0 1 20 1M5 20A15 15 0 0 1 20 5.500M9.500 20A11 11 0 0 1 20 10M14 20a6 6 0 0 1 6-5.500" />
        <circle cx="19" cy="18.500" r="1.500" fill="#fff" stroke="none" />
      </svg>
      <svg width="24" height="18" viewBox="0 0 24 18" className="ml-[10px]" fill="none" stroke="#fff" strokeWidth="1.400">
        <path d="M1 6h3.500L9.500 1.500v15L4.500 12H1zM14 5l8.500 8.500M22.500 5L14 13.500" />
      </svg>
      <span className="ml-[13px] w-[23px] text-[23px] leading-7">英</span>
      <div className="ml-[20px] flex h-[23px] w-[24px] -rotate-6 items-center justify-center rounded-[5px] bg-[#f4611f] text-[21px] font-black leading-none [font-family:Inter,sans-serif]">
        S
      </div>
      <div className="-mt-px ml-[26px] flex w-[98px] flex-col items-center whitespace-nowrap text-[19px] leading-[28px]">
        <span className="tracking-[-0.400px]">22:45</span>
        <span>2024/7/15</span>
      </div>
      <svg width="26" height="26" viewBox="0 0 26 26" className="ml-[29px] mr-[25px]" fill="none" stroke="#fff" strokeWidth="1.500">
        <path d="M1 1h24v19.500h-8.500L13 24l-3.500-3.500H1z" />
      </svg>
    </div>
  );
}

function Taskbar() {
  return (
    <footer className="flex h-[63px] items-center border-t border-[#4c5f6b] bg-[linear-gradient(90deg,#20353f_0%,#20343f_55%,#1a2b43_80%,#182945_100%)]">
      <div className="flex h-full w-[75px] items-center justify-center">
        <svg width="21" height="21" viewBox="0 0 21 21" fill="#fff">
          <path d="M0 3l9-1.300V10H0zM10 1.600L21 0v10H10zM0 11h9v8.300L0 18zM10 11h11v10l-11-1.600z" />
        </svg>
      </div>
      <div className="flex h-full w-[530px] items-center border-b border-[#b9b9b9] bg-[#f3f2f3]">
        <svg width="27" height="27" viewBox="0 0 27 27" className="ml-[18px]" fill="none" stroke="#222" strokeWidth="1.900">
          <circle cx="16.500" cy="10" r="8.500" />
          <path d="M10.500 16L1 25.500" />
        </svg>
        <span className="ml-[17px] whitespace-nowrap text-[23.700px] leading-8 text-[#333]">在此键入进行搜索</span>
      </div>
      <div className="flex h-full w-[79px] items-center justify-center pl-[3px]">
        <ExplorerIcon />
      </div>
      <div className="flex h-full w-[75px] items-center justify-center">
        <ZoomIcon />
      </div>
      <div className="flex h-full w-[75px] items-center justify-center">
        <EdgeIcon />
      </div>
      <div className="flex h-full w-[73px] items-center justify-center">
        <FirefoxIcon />
      </div>
      <div className="flex h-full w-[77px] items-center justify-center">
        <PinwheelIcon />
      </div>
      <div className="ml-px flex h-full w-[74px] items-center justify-center border-b-[3px] border-[#76b5ea] bg-[#4a5a65] pt-[3px]">
        <ChromeIcon />
      </div>
      <div className="ml-[7px] flex h-full w-[61px] items-center justify-center border-b-[3px] border-[#76b5ea] pt-[3px]">
        <div className="mr-[2px] flex h-[38px] w-[37px] items-center justify-center rounded-[8px] bg-white">
          <TeamMark w={29} h={25} />
        </div>
      </div>
      <Tray />
    </footer>
  );
}

export default function App() {
  return (
    <div className="relative flex h-[958px] w-[1690px] flex-col overflow-hidden bg-[#0099fb] [font-family:'Open_Sans','Noto_Sans_CJK_SC',sans-serif]">
      <div className="flex h-[895px] bg-[linear-gradient(90deg,#009dff_0px,#0090f5_400px,#0068dc_900px,#0045bd_1300px,#0039a8_1690px)]">
        <Desktop />
        <div className="mt-[9px] flex w-[1565px] shrink-0 flex-col border-l border-t border-[#2c5f92]">
          <TabStrip />
          <Toolbar />
          <BookmarksBar />
          <div className="flex h-[699px] bg-white">
            <Sidebar />
            <Overview />
            <PageScrollbar />
          </div>
        </div>
      </div>
      <Taskbar />

      <div className="absolute left-[41px] top-[91px] flex h-[77px] w-[77px] items-center justify-center rounded-full border border-[#c9d3da] bg-[#f2f6f9]">
        <TeamMark w={46} h={40} />
      </div>
      <div className="absolute left-[1667px] top-[584px] flex h-[50px] w-[50px] items-center rounded-full bg-[#4a8bfc] pl-[17px]">
        <svg width="11" height="18" viewBox="0 0 11 18" fill="none" stroke="#fff" strokeWidth="2.500">
          <path d="M9 1.500L2 9l7 7.500" />
        </svg>
      </div>
    </div>
  );
}
